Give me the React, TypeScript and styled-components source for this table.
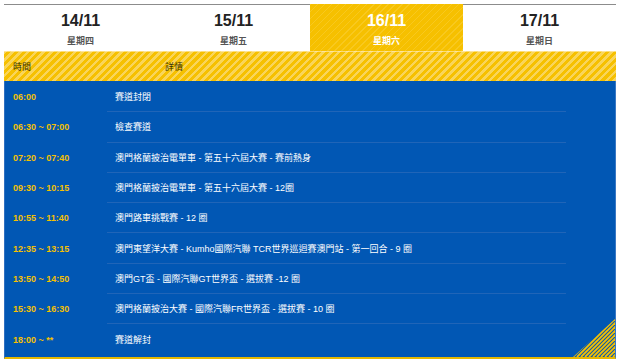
import React from "react";
import styled, { createGlobalStyle, css } from "styled-components";

const GlobalStyle = createGlobalStyle`
  html, body { margin: 0; padding: 0; background: #fff; }
  body { padding: 4px; font-family: "Liberation Sans", "Noto Sans CJK TC", Arial, sans-serif; }
`;

const YELLOW = "#f6c000";
const BLUE = "#0157b4";

const stripes = (base: string, light: string) => css`
  background-color: ${base};
  background-image: repeating-linear-gradient(
    135deg,
    ${light} 0px,
    ${light} 2.5px,
    ${base} 2.5px,
    ${base} 5.5px
  );
`;

const Wrap = styled.div`
  width: 612px;
  display: flex;
  flex-direction: column;
`;

const Tabs = styled.div`
  display: grid;
  grid-template-columns: repeat(4, 1fr);
  height: 47px;
`;

const Tab = styled.div<{ $active?: boolean }>`
  display: flex;
  flex-direction: column;
  align-items: center;
  box-sizing: border-box;
  padding-top: 8px;
  ${(p) =>
    p.$active
      ? css`
          background-color: #f6c000;
          background-image: repeating-linear-gradient(
            135deg,
            rgba(255, 230, 140, 0.22) 0px,
            rgba(255, 230, 140, 0.22) 1px,
            transparent 1px,
            transparent 5px
          );
          color: #fff;
        `
      : css`
          background: #fff;
          border-top: 1px solid #8c8c8c;
          padding-top: 7px;
          color: #222;
        `}
`;

const DateText = styled.div`
  font-size: 16px;
  font-weight: bold;
  line-height: 18px;
`;

const DayText = styled.div<{ $active?: boolean }>`
  font-size: 9px;
  font-weight: bold;
  line-height: 12px;
  margin-top: 5px;
  color: ${(p) => (p.$active ? "#fff" : "#555")};
`;

const HeaderRow = styled.div`
  height: 30px;
  display: flex;
  align-items: center;
  position: relative;
  font-size: 9px;
  color: #3a3000;
  ${stripes("#f6c000", "#f9d55a")}
  box-shadow: inset 0 1px 0 rgba(255, 240, 200, 0.6);
`;

const HeadTime = styled.div`
  width: 161px;
  padding-left: 9px;
  box-sizing: border-box;
`;

const HeadDetail = styled.div`
  flex: 1;
`;

const Body = styled.div`
  background: ${BLUE};
  padding: 1px 0 2px;
  border-left: 1px solid #2f6fc0;
  border-right: 1px solid #3a78c4;
  border-bottom: 2px solid #e6b800;
  position: relative;
  overflow: hidden;
`;

const Row = styled.div`
  display: flex;
  height: 30.3px;
`;

const TimeCell = styled.div`
  width: 102px;
  padding-left: 8px;
  box-sizing: border-box;
  display: flex;
  align-items: center;
  color: ${YELLOW};
  font-weight: bold;
  font-size: 9px;
`;

const DetailCell = styled.div<{ $last?: boolean }>`
  width: 459px;
  padding-left: 8px;
  box-sizing: border-box;
  display: flex;
  align-items: center;
  color: #fff;
  font-size: 9px;
  border-bottom: ${(p) => (p.$last ? "none" : "1px solid #2065b8")};
`;

const Corner = styled.svg`
  position: absolute;
  right: 0;
  bottom: 0;
  width: 42px;
  height: 38px;
`;

const days = [
  { date: "14/11", day: "星期四" },
  { date: "15/11", day: "星期五" },
  { date: "16/11", day: "星期六", active: true },
  { date: "17/11", day: "星期日" },
];

const rows = [
  ["06:00", "賽道封閉"],
  ["06:30 ~ 07:00", "檢查賽道"],
  ["07:20 ~ 07:40", "澳門格蘭披治電單車 - 第五十六屆大賽 - 賽前熱身"],
  ["09:30 ~ 10:15", "澳門格蘭披治電單車 - 第五十六屆大賽 - 12圈"],
  ["10:55 ~ 11:40", "澳門路車挑戰賽 - 12 圈"],
  ["12:35 ~ 13:15", "澳門東望洋大賽 - Kumho國際汽聯 TCR世界巡迴賽澳門站 - 第一回合 - 9 圈"],
  ["13:50 ~ 14:50", "澳門GT盃 - 國際汽聯GT世界盃 - 選拔賽 -12 圈"],
  ["15:30 ~ 16:30", "澳門格蘭披治大賽 - 國際汽聯FR世界盃 - 選拔賽 - 10 圈"],
  ["18:00 ~ **", "賽道解封"],
];

export default function App() {
  const lines = [];
  for (let i = -40; i < 60; i += 4) {
    lines.push(<line key={i} x1={i} y1={38} x2={i + 38} y2={0} stroke={YELLOW} strokeWidth={1.8} />);
  }
  return (
    <>
      <GlobalStyle />
      <Wrap>
        <Tabs>
          {days.map((d) => (
            <Tab key={d.date} $active={d.active}>
              <DateText>{d.date}</DateText>
              <DayText $active={d.active}>{d.day}</DayText>
            </Tab>
          ))}
        </Tabs>
        <HeaderRow>
          <HeadTime>時間</HeadTime>
          <HeadDetail>詳情</HeadDetail>
        </HeaderRow>
        <Body>
          {rows.map(([t, d], i) => (
            <Row key={i}>
              <TimeCell>{t}</TimeCell>
              <DetailCell $last={i === rows.length - 1}>{d}</DetailCell>
            </Row>
          ))}
          <Corner viewBox="0 0 42 38">
            <defs>
              <clipPath id="tri">
                <polygon points="0,38 42,38 42,0" />
              </clipPath>
            </defs>
            <g clipPath="url(#tri)">{lines}</g>
          </Corner>
        </Body>
      </Wrap>
    </>
  );
}
